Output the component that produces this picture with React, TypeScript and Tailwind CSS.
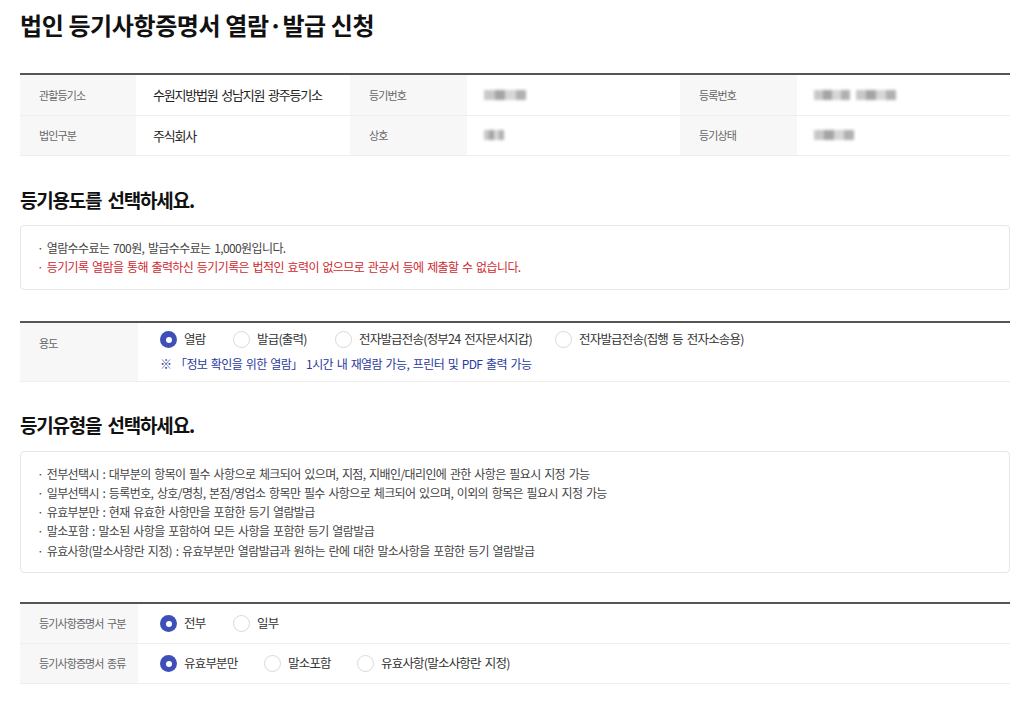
import type {ReactNode} from "react";

const font = {fontFamily: '"Noto Sans CJK KR", "Noto Sans", sans-serif'};

// Masked value placeholder (blurred text block)
function Masked({widths}: {widths: number[]}) {
    return (
        <div className="flex items-center gap-[6px]">
            {widths.map((w, i) => (
                <div key={i} className="flex h-[10px] blur-[1.5px]" style={{width: w}}>
                    <div className="h-full flex-1 bg-[#c8c8c8]"/>
                    <div className="h-full flex-1 bg-[#a4a4a4]"/>
                    <div className="h-full flex-1 bg-[#d6d6d6]"/>
                    <div className="h-full flex-1 bg-[#b0b0b0]"/>
                </div>
            ))}
        </div>
    );
}

function Radio({label, checked = false}: {label: string; checked?: boolean}) {
    return (
        <label className="flex items-center gap-[7px] whitespace-nowrap text-[12.5px] tracking-[-0.8px] [word-spacing:2px] text-[#333]">
            {checked ? (
                <span className="flex h-[17px] w-[17px] shrink-0 items-center justify-center rounded-full bg-[#3f4fb8]">
                    <span className="h-[6px] w-[6px] rounded-full bg-white"/>
                </span>
            ) : (
                <span className="h-[17px] w-[17px] shrink-0 rounded-full border border-[#d9d9d9] bg-white"/>
            )}
            {label}
        </label>
    );
}

function InfoCell({label, children}: {label: string; children: ReactNode}) {
    return (
        <>
            <div className="flex items-center border-b border-[#eee] bg-[#f7f7f7] pl-[19px] text-[11px] tracking-[-0.9px] text-[#666]">{label}</div>
            <div className="flex items-center whitespace-nowrap border-b border-[#eee] pl-[17px] text-[13px] tracking-[-1.2px] [word-spacing:2px] text-[#222]">{children}</div>
        </>
    );
}

function FormRow({label, children, tall = false}: {label: string; children: ReactNode; tall?: boolean}) {
    return (
        <div className="flex border-b border-[#eee]">
            <div className={`flex w-[118px] shrink-0 whitespace-nowrap bg-[#f7f7f7] pl-[19px] text-[11px] tracking-[-0.9px] [word-spacing:2px] text-[#666] ${tall ? "pt-[12px]" : "items-center"}`}>
                {label}
            </div>
            <div className="flex-1 pl-[22px]">{children}</div>
        </div>
    );
}

function Notice({lines}: {lines: {text: string; red?: boolean}[]}) {
    return (
        <div className="rounded-[4px] border border-[#e6e6e6] px-[16px] py-[12px]">
            {lines.map((l, i) => (
                <p key={i} className={`text-[12px] leading-[19.3px] tracking-[-0.6px] [word-spacing:1.5px] ${l.red ? "text-[#d0282e]" : "text-[#444]"}`}>
                    · {l.text}
                </p>
            ))}
        </div>
    );
}

function App() {
    return (
        <div className="min-h-[701px] bg-white px-[20px] pt-[9px] pr-[14px]" style={font}>
            {/* Page title */}
            <h1 className="text-[24px] font-bold leading-[32px] tracking-[-0.4px] text-[#111]">
                법인 등기사항증명서 열람·발급 신청
            </h1>

            {/* Corporation summary */}
            <section className="mt-[32px] border-t-2 border-[#555]">
                <div className="grid h-[81px] grid-cols-[116px_214px_117px_213px_117px_213px] grid-rows-2">
                    <InfoCell label="관할등기소">수원지방법원 성남지원 광주등기소</InfoCell>
                    <InfoCell label="등기번호"><Masked widths={[42]}/></InfoCell>
                    <InfoCell label="등록번호"><Masked widths={[36, 40]}/></InfoCell>
                    <InfoCell label="법인구분">주식회사</InfoCell>
                    <InfoCell label="상호"><Masked widths={[20]}/></InfoCell>
                    <InfoCell label="등기상태"><Masked widths={[40]}/></InfoCell>
                </div>
            </section>

            {/* Purpose */}
            <h2 className="mt-[30px] text-[19px] font-bold leading-[28px] tracking-[-1.2px] [word-spacing:3px] text-[#111]">
                등기용도를 선택하세요.
            </h2>
            <div className="mt-[11px]">
                <Notice
                    lines={[
                        {text: "열람수수료는 700원, 발급수수료는 1,000원입니다."},
                        {text: "등기기록 열람을 통해 출력하신 등기기록은 법적인 효력이 없으므로 관공서 등에 제출할 수 없습니다.", red: true},
                    ]}
                />
            </div>

            <section className="mt-[31px] border-t-2 border-[#555]">
                <FormRow label="용도" tall>
                    <div className="flex h-[58px] flex-col justify-center gap-[6px]">
                        <div className="flex items-center">
                            <div className="w-[73px]"><Radio label="열람" checked/></div>
                            <div className="w-[102px]"><Radio label="발급(출력)"/></div>
                            <div className="w-[220px]"><Radio label="전자발급전송(정부24 전자문서지갑)"/></div>
                            <Radio label="전자발급전송(집행 등 전자소송용)"/>
                        </div>
                        <p className="text-[12px] tracking-[-0.6px] [word-spacing:1.5px] text-[#2b3a9e]">
                            ※ 「정보 확인을 위한 열람」 1시간 내 재열람 가능, 프린터 및 PDF 출력 가능
                        </p>
                    </div>
                </FormRow>
            </section>

            {/* Type */}
            <h2 className="mt-[29px] text-[19px] font-bold leading-[28px] tracking-[-1.2px] [word-spacing:3px] text-[#111]">
                등기유형을 선택하세요.
            </h2>
            <div className="mt-[12px]">
                <Notice
                    lines={[
                        {text: "전부선택시 : 대부분의 항목이 필수 사항으로 체크되어 있으며, 지점, 지배인/대리인에 관한 사항은 필요시 지정 가능"},
                        {text: "일부선택시 : 등록번호, 상호/명칭, 본점/영업소 항목만 필수 사항으로 체크되어 있으며, 이외의 항목은 필요시 지정 가능"},
                        {text: "유효부분만 : 현재 유효한 사항만을 포함한 등기 열람발급"},
                        {text: "말소포함 : 말소된 사항을 포함하여 모든 사항을 포함한 등기 열람발급"},
                        {text: "유효사항(말소사항란 지정) : 유효부분만 열람발급과 원하는 란에 대한 말소사항을 포함한 등기 열람발급"},
                    ]}
                />
            </div>

            <section className="mt-[29px] border-t-2 border-[#555]">
                <FormRow label="등기사항증명서 구분">
                    <div className="flex h-[39px] items-center">
                        <div className="w-[73px]"><Radio label="전부" checked/></div>
                        <Radio label="일부"/>
                    </div>
                </FormRow>
                <FormRow label="등기사항증명서 종류">
                    <div className="flex h-[39px] items-center">
                        <div className="w-[104px]"><Radio label="유효부분만" checked/></div>
                        <div className="w-[93px]"><Radio label="말소포함"/></div>
                        <Radio label="유효사항(말소사항란 지정)"/>
                    </div>
                </FormRow>
            </section>
        </div>
    );
}

export default App;
